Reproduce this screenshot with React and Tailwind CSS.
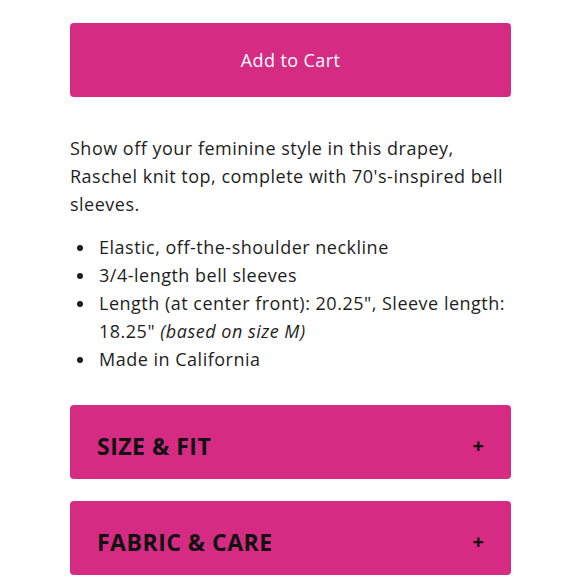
export default function App() {
  const font = { fontFamily: '"Open Sans", "DejaVu Sans", sans-serif' };
  return (
    <div className="w-[580px] h-[580px] bg-white overflow-hidden" style={font}>
      <div className="pl-[70px] w-[511px] pt-[23px]">
        <button className="w-[441px] h-[74px] rounded-[4px] bg-[#d62b83] text-white text-[18px] font-normal tracking-[0.4px]">
          Add to Cart
        </button>
        <p className="mt-[37px] text-[18px] leading-[28px] text-[#1e1e1e] tracking-[0.5px]">
          Show off your feminine style in this drapey, Raschel knit top, complete with 70's-inspired bell sleeves.
        </p>
        <ul className="mt-[15px] text-[18px] leading-[28px] text-[#1e1e1e] tracking-[0.5px]">
          {[
            <>Elastic, off-the-shoulder neckline</>,
            <>3/4-length bell sleeves</>,
            <>Length (at center front): 20.25", Sleeve length: 18.25" <em>(based on size M)</em></>,
            <>Made in California</>,
          ].map((t, i) => (
            <li key={i} className="flex">
              <span className="w-[29px] shrink-0 flex">
                <span className="mt-[12px] ml-[7px] w-[6px] h-[6px] rounded-full bg-[#1e1e1e]" />
              </span>
              <span>{t}</span>
            </li>
          ))}
        </ul>
        <div className="mt-[32px] flex flex-col gap-[22px]">
          {["SIZE & FIT", "FABRIC & CARE"].map((t) => (
            <div key={t} className="h-[74px] rounded-[4px] bg-[#d62b83] flex items-center justify-between pl-[27px] pr-[27px] pt-[8px]">
              <span className="text-[23px] font-bold text-[#111] tracking-[0.5px]">{t}</span>
              <span className="text-[20px] font-bold text-[#111]">+</span>
            </div>
          ))}
        </div>
      </div>
    </div>
  );
}
